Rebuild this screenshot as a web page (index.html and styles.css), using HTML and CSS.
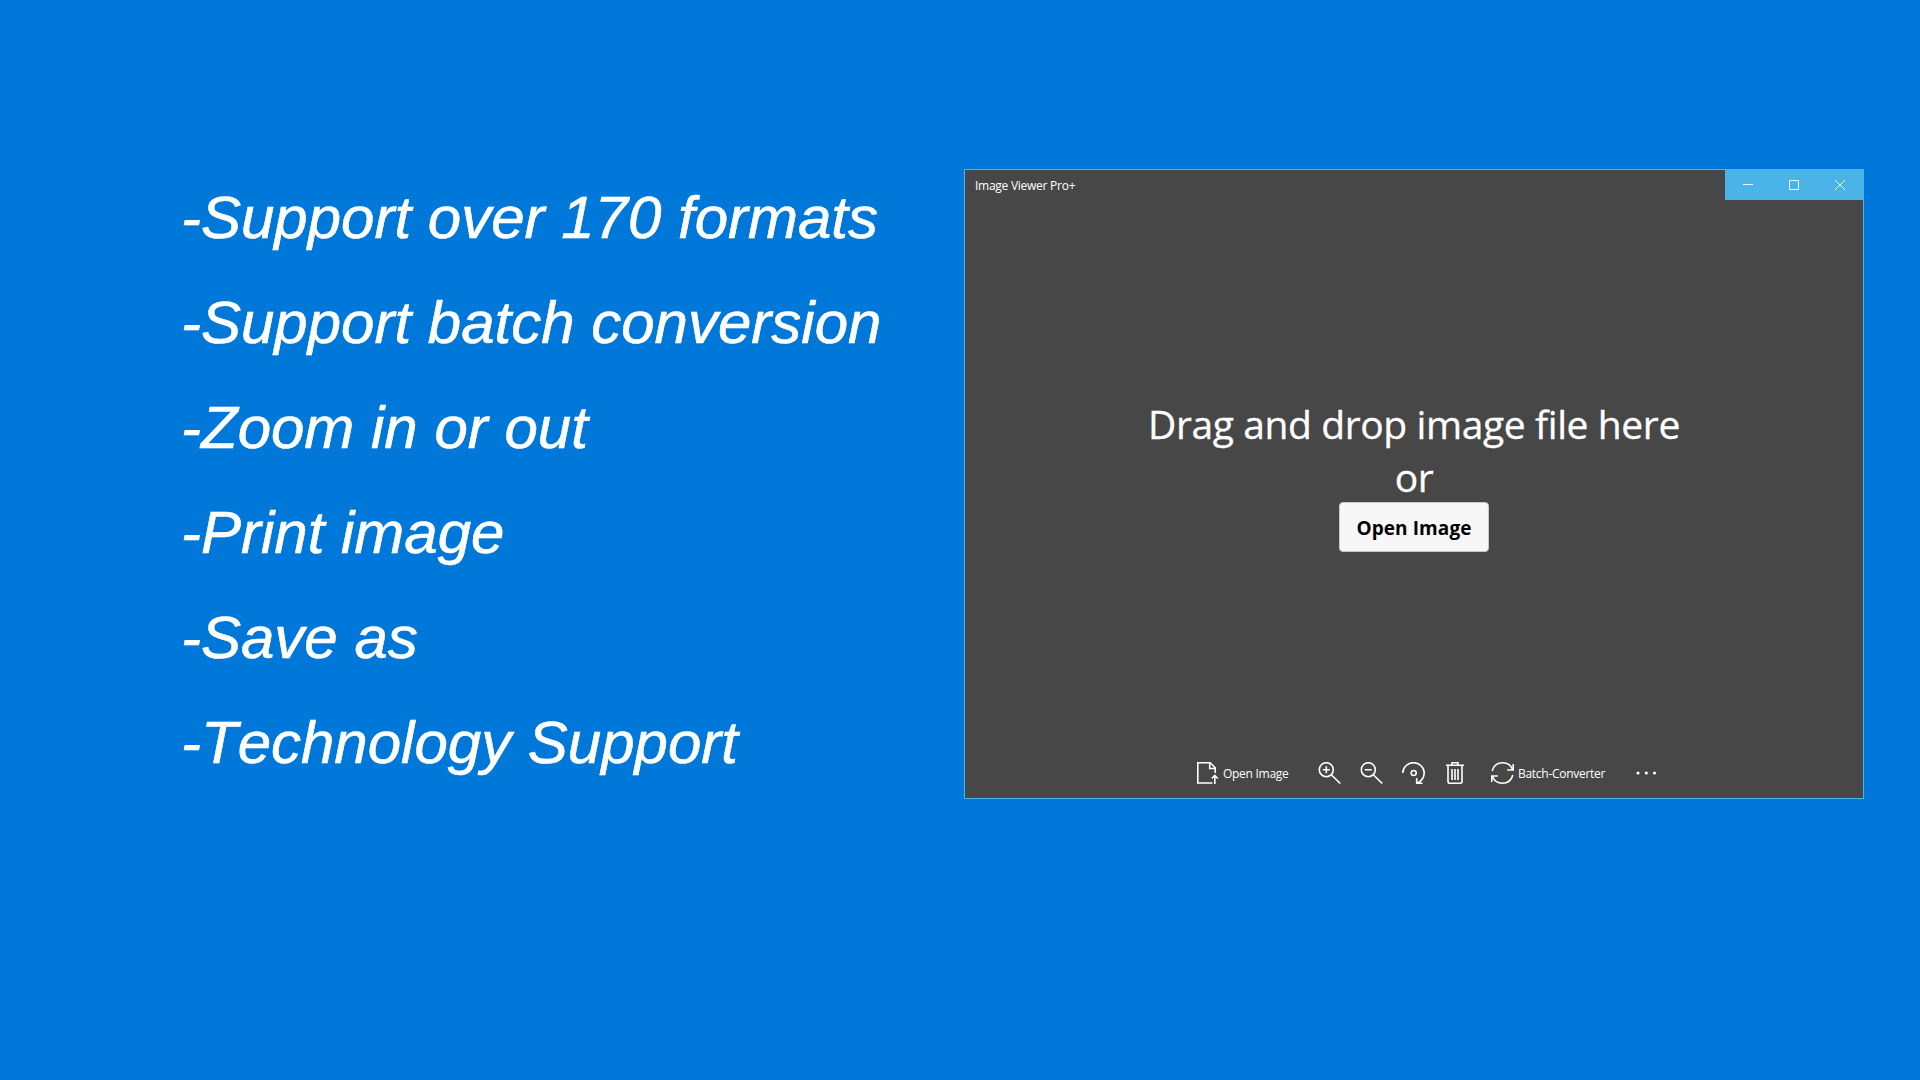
FILE: index.html
```
<!DOCTYPE html>
<html lang="en">
<head>
    <meta charset="UTF-8">
    <meta name="viewport" content="width=device-width, initial-scale=1.0">
    <title>Image Viewer Pro+</title>
    <link rel="stylesheet" href="styles.css">
</head>
<body>

    <ul class="features">
        <li>-Support over 170 formats</li>
        <li>-Support batch conversion</li>
        <li>-Zoom in or out</li>
        <li>-Print image</li>
        <li>-Save as</li>
        <li>-Technology Support</li>
    </ul>

    <div class="window">
        <div class="titlebar">
            <span class="title">Image Viewer Pro+</span>
            <div class="controls">
                <svg width="46" height="31" viewBox="0 0 46 31"><path d="M18 15.5h10"/></svg>
                <svg width="46" height="31" viewBox="0 0 46 31"><path d="M18.500 11.500h9v9h-9z"/></svg>
                <svg width="46" height="31" viewBox="0 0 46 31"><path d="M18 11l10 10M28 11l-10 10"/></svg>
            </div>
        </div>

        <div class="drop">
            <p>Drag and drop image file here</p>
            <p>or</p>
            <button class="open-button">Open Image</button>
        </div>

        <!-- Bottom toolbar -->
        <div class="toolbar">
            <div class="open">
                <svg width="22" height="22" viewBox="0 0 22 22"><path d="M15.500 21H.8V.8h12.400l5 5V11M12.700 1v5.500h5.500M17.800 22v-8.500M14.800 16.500l3-3 3 3"/></svg>
                <span>Open Image</span>
            </div>
            <svg class="zoom-in" width="23" height="22" viewBox="0 0 23 22"><circle cx="8.300" cy="7.700" r="7"/><path d="M13.300 12.700l9 8.800M4.800 7.700h7M8.300 4.200v7"/></svg>
            <svg class="zoom-out" width="23" height="22" viewBox="0 0 23 22"><circle cx="8.300" cy="7.700" r="7"/><path d="M13.300 12.700l9 8.800M4.800 7.700h7"/></svg>
            <svg class="rotate" width="23" height="22" viewBox="0 0 23 22"><path d="M.8 11A10.700 10.300 0 0 1 22.200 11C22.200 15 19.500 19 15.500 21M14.700 16v5.300h5.800"/><circle cx="11.700" cy="11" r="2.500"/></svg>
            <svg class="trash" width="18" height="22" viewBox="0 0 18 22"><path d="M0 3.300h18M6 3V.8h6V3M2 3.500v16q0 1.800 1.800 1.800h10.400q1.800 0 1.800-1.800v-16M6 7v11M9 7v11M12 7v11"/></svg>
            <div class="batch">
                <svg width="23" height="22" viewBox="0 0 23 22"><path d="M1.200 9C2.500 4 6.500.8 11.500.8c4.500 0 8.500 2.700 10 6.700M22.200 2v6h-6M21.800 13c-1.300 5-5.300 8.200-10.300 8.200-4.500 0-8.500-2.700-10-6.700M.8 20v-6h6"/></svg>
                <span>Batch-Converter</span>
            </div>
            <svg class="more" width="22" height="22" viewBox="0 0 22 22"><circle cx="2" cy="11" r="1.600"/><circle cx="10.300" cy="11" r="1.600"/><circle cx="18.500" cy="11" r="1.600"/></svg>
        </div>
    </div>

</body>
</html>
```
FILE: styles.css
```
* {
    box-sizing: border-box;
}
body {
    margin: 0;
    height: 1080px;
    overflow: hidden;
    display: flex;
    align-items: flex-start;
    background-color: #0078d9;
    color: #fff;
    font-family: "Open Sans", "Noto Sans", sans-serif;
}
svg {
    display: block;
    flex: none;
    fill: none;
    stroke: #fff;
}
.features {
    width: 783px;
    margin: 165px 0 0 181px;
    padding: 0;
    list-style: none;
    font: italic 60px/105px "Liberation Sans", Arial, sans-serif;
    font-kerning: none;
    white-space: nowrap;
    -webkit-text-stroke: 0.6px #fff;
}
.window {
    display: flex;
    flex-direction: column;
    width: 900px;
    height: 630px;
    margin-top: 169px;
    border: 1px solid #4ab3e8;
    background-color: #474747;
}
.titlebar {
    display: flex;
    justify-content: space-between;
    height: 30px;
    padding-left: 10px;
}
.title {
    font-size: 12px;
    line-height: 31px;
    letter-spacing: -0.26px;
}
.controls {
    display: flex;
    height: 31px;
    margin-top: -1px;
    background-color: #4ab3e8;
}
.controls svg {
    stroke-width: 0.9;
}
.drop {
    flex: 1;
    padding-top: 198px;
    text-align: center;
}
.drop p {
    margin: 0;
    font-size: 39px;
    line-height: 52.5px;
    letter-spacing: -0.4px;
    -webkit-text-stroke: 0.3px #fff;
}
.open-button {
    display: block;
    width: 150px;
    height: 50px;
    margin: -1px auto 0;
    padding: 2px 0 0;
    border: 1px solid #c8c8c8;
    border-radius: 4px;
    background-color: #f7f7f7;
    color: #000;
    font: bold 19px/46px "Open Sans", "Noto Sans", sans-serif;
    letter-spacing: 0.1px;
}
.toolbar {
    display: flex;
    height: 36px;
    padding-left: 232px;
    font-size: 12px;
    line-height: 24px;
    letter-spacing: -0.28px;
}
.toolbar svg {
    stroke-width: 1.6;
}
.open,
.batch {
    display: flex;
    gap: 4px;
    white-space: nowrap;
}
.open {
    width: 121px;
}
.zoom-in,
.zoom-out {
    margin-right: 19px;
}
.rotate {
    margin-right: 21px;
}
.trash {
    margin-right: 27px;
}
.batch {
    width: 145px;
}
.toolbar .more {
    fill: #fff;
    stroke: none;
}
```
